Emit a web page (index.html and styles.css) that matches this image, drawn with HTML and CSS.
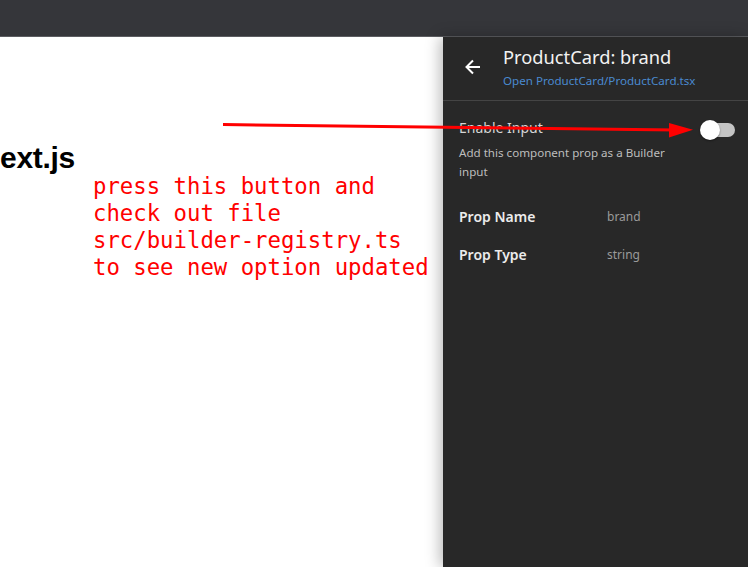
FILE: index.html
```html
<!DOCTYPE html>
<html>
<head>
<meta charset="utf-8">
<link rel="stylesheet" href="styles.css">
</head>
<body>
<div class="topbar"></div>
<div class="main">
  <div class="page">
    <h1 class="heading">ext.js</h1>
    <div class="note">press this button and<br>check out file<br>src/builder-registry.ts<br>to see new option updated</div>
  </div>
  <aside class="panel">
    <div class="panel-header">
      <svg class="back" width="18" height="18" viewBox="0 0 18 18"><path d="M16 9H3M9 2.5L2.5 9 9 15.5" fill="none" stroke="#fff" stroke-width="2"/></svg>
      <div class="titles">
        <div class="title">ProductCard: brand</div>
        <div class="link">Open ProductCard/ProductCard.tsx</div>
      </div>
    </div>
    <div class="panel-body">
      <div class="toggle-row">
        <span class="label">Enable Input</span>
        <span class="switch"><span class="knob"></span></span>
      </div>
      <p class="desc">Add this component prop as a Builder input</p>
      <div class="prop first"><span class="prop-key">Prop Name</span><span class="prop-val">brand</span></div>
      <div class="prop"><span class="prop-key">Prop Type</span><span class="prop-val">string</span></div>
    </div>
  </aside>
</div>
<svg class="annot" width="748" height="567" viewBox="0 0 748 567">
  <line x1="223" y1="124.5" x2="676" y2="130" stroke="#ff0000" stroke-width="3"/>
  <polygon points="669,123 693,129.8 669,137.5" fill="#ff0000"/>
</svg>
</body>
</html>
```
FILE: styles.css
```css
html, body {
  margin: 0;
  padding: 0;
  height: 567px;
  overflow: hidden;
  background: #fff;
}
.topbar {
  height: 36px;
  background: #35363a;
  border-bottom: 1px solid #5c5d61;
}
.main {
  display: flex;
  height: 530px;
}
.page {
  flex: 1;
  background: #fff;
  padding-top: 104px;
}
.heading {
  margin: 0;
  font-family: "Liberation Sans", Arial, sans-serif;
  font-weight: bold;
  font-size: 30px;
  line-height: 34px;
  color: #000;
  letter-spacing: -0.3px;
}
.note {
  margin-top: -2px;
  padding-left: 93px;
  font-family: "DejaVu Sans Mono", monospace;
  font-size: 22.3px;
  line-height: 27px;
  color: #ff0000;
  white-space: nowrap;
}
.panel {
  width: 305px;
  background: #282828;
  box-shadow: -3px 0 14px rgba(0, 0, 0, 0.28);
  font-family: "Noto Sans", "Open Sans", sans-serif;
  position: relative;
}
.panel-header {
  display: flex;
  align-items: center;
  padding: 8px 0 11px 21px;
  border-bottom: 1px solid #444;
  gap: 21px;
}
.back {
  flex: none;
}
.title {
  font-size: 18.3px;
  line-height: 24px;
  color: #f2f2f2;
}
.link {
  margin-top: 4px;
  font-size: 11.6px;
  line-height: 16px;
  color: #4a8ad0;
}
.panel-body {
  padding: 17px 13px 0 16px;
}
.toggle-row {
  display: flex;
  align-items: center;
  justify-content: space-between;
  height: 20px;
}
.label {
  font-size: 14px;
  line-height: 20px;
  color: #d6d6d6;
}
.switch {
  position: relative;
  width: 32px;
  height: 14px;
  border-radius: 7px;
  background: #c4c4c4;
  margin-top: 4px;
}
.knob {
  position: absolute;
  left: -3px;
  top: -3px;
  width: 20px;
  height: 20px;
  border-radius: 50%;
  background: #fff;
  box-shadow: 0 1px 2px rgba(0, 0, 0, 0.4);
}
.desc {
  margin: 5px 0 0 0;
  width: 210px;
  font-size: 11.6px;
  line-height: 19px;
  color: #bdbdbd;
}
.prop {
  display: flex;
  height: 20px;
  align-items: center;
  margin-top: 18px;
}
.prop.first {
  margin-top: 25px;
}
.prop-key {
  width: 148px;
  font-size: 14px;
  font-weight: 600;
  color: #ececec;
}
.prop-val {
  font-size: 12px;
  color: #9a9a9a;
}
.annot {
  position: absolute;
  left: 0;
  top: 0;
  pointer-events: none;
}
```
